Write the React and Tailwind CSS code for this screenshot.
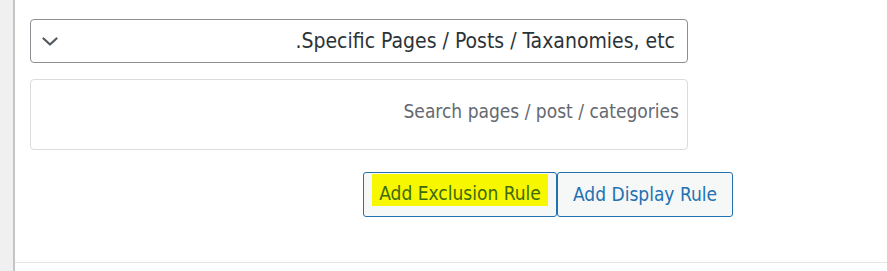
import React from 'react';

const Chevron = () => (
  <svg width="16" height="9" viewBox="0 0 16 9" fill="none" className="shrink-0">
    <path d="M1.5 1.5 L8 7.5 L14.5 1.5" stroke="#50575e" strokeWidth="2.2" strokeLinecap="round" strokeLinejoin="round" />
  </svg>
);

const App = () => {
  return (
    <div className="flex w-[887px] h-[271px] bg-white overflow-hidden font-stretch-condensed" style={{ fontFamily: '"DejaVu Sans Condensed", "DejaVu Sans", sans-serif' }}>
      <div className="w-[15px] shrink-0 bg-[#f0f0f1] border-r-2 border-[#c3c4c7]"></div>
      <div className="flex-1 flex flex-col">
        <div className="flex-1 pl-[15px] pt-[19px]">
          <div className="w-[658px] h-[44px] flex items-center border border-[#8c8f94] rounded-[4px] pl-[11px] pr-[12px]">
            <Chevron />
            <span className="flex-1 text-right text-[21px] leading-none text-[#2c3338] whitespace-nowrap">.Specific Pages / Posts / Taxanomies, etc</span>
          </div>
          <div className="mt-[16px] w-[658px] h-[71px] flex items-center justify-end border border-[#dcdcde] rounded-[4px] pr-[8px] pb-[6px]">
            <span className="text-[19px] leading-none text-[#646970] whitespace-nowrap">Search pages / post / categories</span>
          </div>
          <div className="mt-[22px] pl-[333px] flex">
            <button className="w-[194px] h-[45px] flex items-start justify-center pt-[1px] bg-[#f6f7f7] border border-[#2271b1] rounded-[3px]">
              <span className="bg-[#f7f700] w-[176px] h-[32px] flex items-end justify-center pb-[3px] text-[19px] leading-none text-[#3d6b0c] whitespace-nowrap">Add Exclusion Rule</span>
            </button>
            <button className="w-[176px] h-[45px] flex items-center justify-center bg-[#f6f7f7] border border-[#2271b1] rounded-[3px] text-[19px] leading-none text-[#2271b1] whitespace-nowrap">
              Add Display Rule
            </button>
          </div>
        </div>
        <div className="h-[9px] border-t border-[#e5e5e5]"></div>
      </div>
    </div>
  );
};

export default App;
